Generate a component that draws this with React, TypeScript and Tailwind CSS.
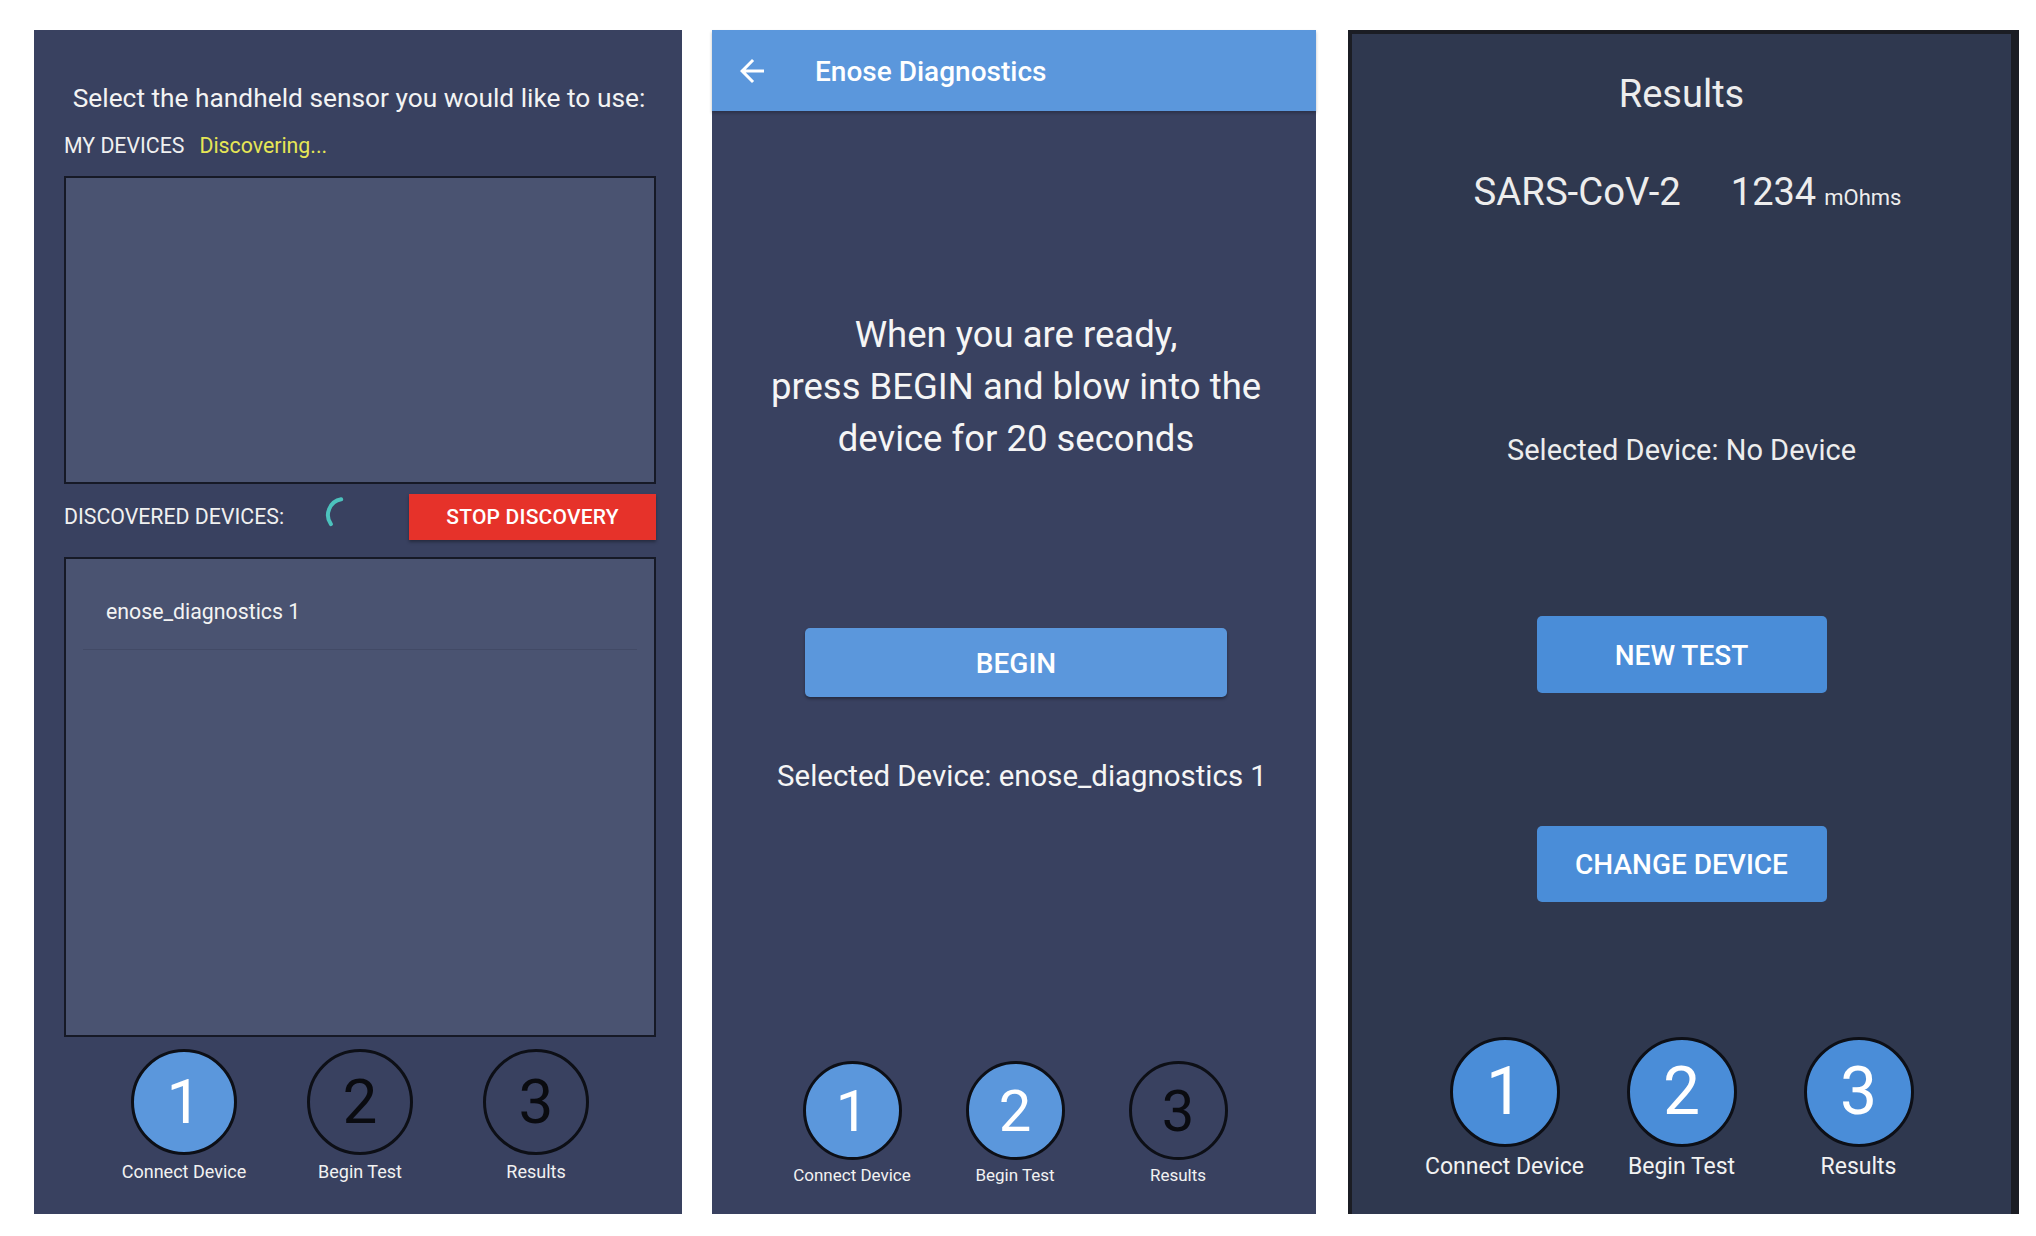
import React from "react";

const font = { fontFamily: "Roboto, 'Noto Sans', 'Liberation Sans', sans-serif" };

function Step({
  n,
  label,
  active,
  size,
  digit,
  labelCls,
  width,
  fill,
}: {
  n: number;
  label: string;
  active: boolean;
  size: string;
  digit: string;
  labelCls: string;
  width: string;
  fill: string;
}) {
  return (
    <div className={`flex flex-col items-center ${width}`}>
      <div
        className={`${size} rounded-full border-[3px] border-[#0d0f16] flex items-center justify-center ${
          active ? `${fill} text-white` : "bg-transparent text-[#0a0b10]"
        }`}
      >
        <span className={`${digit} leading-none`}>{n}</span>
      </div>
      <div className={`${labelCls} text-[#f2f2f2] whitespace-nowrap`}>{label}</div>
    </div>
  );
}

function PanelOne() {
  return (
    <div className="w-[648px] h-[1184px] bg-[#394160] flex flex-col shrink-0">
      <div className="mt-[53px] text-center text-[26.3px] leading-[30px] text-[#f3f3f3] pl-[2px]">
        Select the handheld sensor you would like to use:
      </div>
      <div className="mt-[20px] ml-[30px] flex items-center h-[26px] text-[21.3px] leading-[26px]">
        <span className="text-[#f0f0f0]">MY DEVICES</span>
        <span className="ml-[15px] text-[#e6e655]">Discovering...</span>
      </div>
      <div className="mt-[17px] ml-[30px] mr-[26px] h-[308px] bg-[#4a5371] border-2 border-[#161926]" />
      <div className="mt-[10px] ml-[30px] mr-[26px] h-[46px] flex items-center">
        <span className="text-[21.3px] leading-[26px] text-[#f0f0f0] w-[260px]">DISCOVERED DEVICES:</span>
        <svg width="40" height="40" viewBox="0 0 40 40" className="-mt-[4px]">
          <path
            d="M17.2 4.24 A16 16 0 0 0 6.9 29.2"
            fill="none"
            stroke="#4cc2bd"
            strokeWidth="4"
            strokeLinecap="round"
          />
        </svg>
        <button className="ml-auto w-[247px] h-[46px] bg-[#e6322a] text-white text-[21px] font-medium tracking-[0.2px] pt-[2px] shadow-[0_2px_3px_rgba(0,0,0,0.35)]">
          STOP DISCOVERY
        </button>
      </div>
      <div className="mt-[17px] ml-[30px] mr-[26px] h-[480px] bg-[#4a5371] border-2 border-[#161926] flex flex-col">
        <div className="h-[90px] flex items-center pl-[40px] text-[21.3px] text-[#f3f3f3] pt-[16px]">
          enose_diagnostics 1
        </div>
        <div className="mx-[17px] h-px bg-[#424a66]" />
      </div>
      <div className="mt-[12px] flex justify-center pl-[4px]">
        <Step n={1} label="Connect Device" active size="w-[106px] h-[106px]" digit="text-[62px]" labelCls="mt-[5px] text-[18px] leading-[24px]" width="w-[176px]" fill="bg-[#5b97dc]" />
        <Step n={2} label="Begin Test" active={false} size="w-[106px] h-[106px]" digit="text-[62px]" labelCls="mt-[5px] text-[18px] leading-[24px]" width="w-[176px]" fill="bg-[#5b97dc]" />
        <Step n={3} label="Results" active={false} size="w-[106px] h-[106px]" digit="text-[62px]" labelCls="mt-[5px] text-[18px] leading-[24px]" width="w-[176px]" fill="bg-[#5b97dc]" />
      </div>
    </div>
  );
}

function PanelTwo() {
  return (
    <div className="w-[604px] h-[1184px] bg-[#394160] flex flex-col shrink-0">
      <div className="h-[81px] bg-[#5b97dc] flex items-center shadow-[0_2px_3px_rgba(0,0,0,0.25)]">
        <svg width="36" height="36" viewBox="0 0 24 24" className="ml-[22px]" fill="#ffffff">
          <path d="M20 11H7.83l5.59-5.59L12 4l-8 8 8 8 1.41-1.41L7.83 13H20v-2z" />
        </svg>
        <span className="ml-[45px] mt-[2px] text-[28px] font-medium text-white">Enose Diagnostics</span>
      </div>
      <div className="mt-[198px] text-center text-[36.5px] leading-[52px] text-[#f5f5f5] pl-[4px]">
        <div>When you are ready,</div>
        <div>press BEGIN and blow into the</div>
        <div>device for 20 seconds</div>
      </div>
      <div className="mt-[163px] flex justify-center pl-[4px]">
        <button className="w-[422px] h-[69px] rounded-[5px] bg-[#5b97dc] text-white text-[28px] font-medium pt-[2px] shadow-[0_2px_3px_rgba(0,0,0,0.35)]">
          BEGIN
        </button>
      </div>
      <div className="mt-[61px] text-center text-[29.4px] leading-[36px] text-[#f5f5f5] pl-[16px]">
        Selected Device: enose_diagnostics 1
      </div>
      <div className="mt-[267px] flex justify-center pl-[2px]">
        <Step n={1} label="Connect Device" active size="w-[99px] h-[99px]" digit="text-[58px]" labelCls="mt-[5px] text-[17px] leading-[20px]" width="w-[163px]" fill="bg-[#5b97dc]" />
        <Step n={2} label="Begin Test" active size="w-[99px] h-[99px]" digit="text-[58px]" labelCls="mt-[5px] text-[17px] leading-[20px]" width="w-[163px]" fill="bg-[#5b97dc]" />
        <Step n={3} label="Results" active={false} size="w-[99px] h-[99px]" digit="text-[58px]" labelCls="mt-[5px] text-[17px] leading-[20px]" width="w-[163px]" fill="bg-[#5b97dc]" />
      </div>
    </div>
  );
}

function PanelThree() {
  return (
    <div className="w-[671px] h-[1184px] bg-[#2f384f] border-t-[4px] border-l-[4px] border-r-[8px] border-[#1b1d24] flex flex-col shrink-0">
      <div className="mt-[38px] text-center text-[38px] leading-[44px] text-[#ededed]">Results</div>
      <div className="mt-[54px] flex justify-center items-baseline text-[#ededed] pl-[12px]">
        <span className="text-[38.3px] leading-[44px]">SARS-CoV-2</span>
        <span className="ml-[50px] text-[38px] leading-[44px]">1234</span>
        <span className="ml-[8px] text-[22px]">mOhms</span>
      </div>
      <div className="mt-[219px] text-center text-[29px] leading-[34px] text-[#ededed]">
        Selected Device: No Device
      </div>
      <div className="mt-[149px] flex justify-center">
        <button className="w-[290px] h-[77px] rounded-[5px] bg-[#4a8dd8] text-white text-[28px] font-medium pt-[2px]">
          NEW TEST
        </button>
      </div>
      <div className="mt-[133px] flex justify-center">
        <button className="w-[290px] h-[76px] rounded-[5px] bg-[#4a8dd8] text-white text-[28px] font-medium pt-[2px]">
          CHANGE DEVICE
        </button>
      </div>
      <div className="mt-[135px] flex justify-center">
        <Step n={1} label="Connect Device" active size="w-[110px] h-[110px]" digit="text-[66px]" labelCls="mt-[7px] text-[23px] leading-[26px]" width="w-[177px]" fill="bg-[#4a8dd8]" />
        <Step n={2} label="Begin Test" active size="w-[110px] h-[110px]" digit="text-[66px]" labelCls="mt-[7px] text-[23px] leading-[26px]" width="w-[177px]" fill="bg-[#4a8dd8]" />
        <Step n={3} label="Results" active size="w-[110px] h-[110px]" digit="text-[66px]" labelCls="mt-[7px] text-[23px] leading-[26px]" width="w-[177px]" fill="bg-[#4a8dd8]" />
      </div>
    </div>
  );
}

export default function App() {
  return (
    <div className="w-[2036px] h-[1236px] bg-white flex items-start pt-[30px] pl-[34px]" style={font}>
      <PanelOne />
      <div className="w-[30px] shrink-0" />
      <PanelTwo />
      <div className="w-[32px] shrink-0" />
      <PanelThree />
    </div>
  );
}
